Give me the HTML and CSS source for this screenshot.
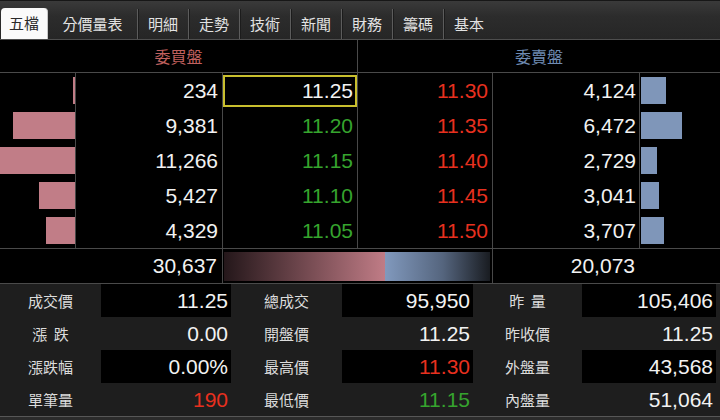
FILE: index.html
```html
<!DOCTYPE html>
<html lang="zh-Hant">
<head>
<meta charset="utf-8">
<title>五檔報價</title>
<link rel="stylesheet" href="styles.css">
</head>
<body>
<div class="app">
  <div class="tabs">
    <div class="tab active t1">五檔</div>
    <div class="tab t2">分價量表</div>
    <div class="tab sep">明細</div>
    <div class="tab sep">走勢</div>
    <div class="tab sep">技術</div>
    <div class="tab sep">新聞</div>
    <div class="tab sep">財務</div>
    <div class="tab sep">籌碼</div>
    <div class="tab sep">基本</div>
  </div>

  <div class="head">
    <div class="hcell bidh">委買盤</div>
    <div class="hcell askh">委賣盤</div>
  </div>

  <div class="book">
    <div class="cell bbar"><span class="bar pink" style="width:2px"></span></div>
    <div class="cell num">234</div>
    <div class="cell num price selcell"><span class="selbox">11.25</span></div>
    <div class="cell num price red">11.30</div>
    <div class="cell num avol">4,124</div>
    <div class="cell abar"><span class="bar blue" style="width:25px"></span></div>

    <div class="cell bbar"><span class="bar pink" style="width:62px"></span></div>
    <div class="cell num">9,381</div>
    <div class="cell num price green">11.20</div>
    <div class="cell num price red">11.35</div>
    <div class="cell num avol">6,472</div>
    <div class="cell abar"><span class="bar blue" style="width:41px"></span></div>

    <div class="cell bbar"><span class="bar pink" style="width:75px"></span></div>
    <div class="cell num">11,266</div>
    <div class="cell num price green">11.15</div>
    <div class="cell num price red">11.40</div>
    <div class="cell num avol">2,729</div>
    <div class="cell abar"><span class="bar blue" style="width:16px"></span></div>

    <div class="cell bbar"><span class="bar pink" style="width:36px"></span></div>
    <div class="cell num">5,427</div>
    <div class="cell num price green">11.10</div>
    <div class="cell num price red">11.45</div>
    <div class="cell num avol">3,041</div>
    <div class="cell abar"><span class="bar blue" style="width:18px"></span></div>

    <div class="cell bbar"><span class="bar pink" style="width:29px"></span></div>
    <div class="cell num">4,329</div>
    <div class="cell num price green">11.05</div>
    <div class="cell num price red">11.50</div>
    <div class="cell num avol">3,707</div>
    <div class="cell abar"><span class="bar blue" style="width:23px"></span></div>
  </div>

  <div class="totals">
    <div class="tcell num">30,637</div>
    <div class="tcell ratio">
      <div class="ratio-bid" style="width:161px"></div>
      <div class="ratio-ask"></div>
    </div>
    <div class="tcell num avol last">20,073</div>
    <div class="tcell last"></div>
  </div>

  <div class="stats">
    <div class="lbl">成交價</div><div class="val dark">11.25</div>
    <div class="lbl">總成交</div><div class="val dark">95,950</div>
    <div class="lbl">昨&nbsp;&nbsp;量</div><div class="val dark">105,406</div>
    <div class="pad"></div>

    <div class="lbl">漲&nbsp;&nbsp;跌</div><div class="val">0.00</div>
    <div class="lbl">開盤價</div><div class="val">11.25</div>
    <div class="lbl">昨收價</div><div class="val">11.25</div>
    <div class="pad"></div>

    <div class="lbl">漲跌幅</div><div class="val dark">0.00%</div>
    <div class="lbl">最高價</div><div class="val dark red">11.30</div>
    <div class="lbl">外盤量</div><div class="val dark">43,568</div>
    <div class="pad"></div>

    <div class="lbl">單筆量</div><div class="val red">190</div>
    <div class="lbl">最低價</div><div class="val green">11.15</div>
    <div class="lbl">內盤量</div><div class="val">51,064</div>
    <div class="pad"></div>
  </div>

  <div class="foot"></div>
</div>
</body>
</html>
```

FILE: styles.css
```css
* { box-sizing: border-box; }

html, body {
  margin: 0;
  padding: 0;
  background: #000;
}

.app {
  width: 720px;
  height: 420px;
  overflow: hidden;
  background: #000;
  color: #f2f2f2;
  font-family: "Liberation Sans", Arial, sans-serif;
}

/* ---------- tabs ---------- */
.tabs {
  height: 40px;
  display: flex;
  align-items: flex-end;
  border-top: 1px solid #171717;
  border-bottom: 1px solid #4e4e4e;
  background: linear-gradient(#3a3a3a, #2c2c2c 40%, #262626);
}

.tab {
  height: 30px;
  width: 51px;
  display: flex;
  align-items: center;
  justify-content: center;
  padding-bottom: 2px;
  font-family: "Noto Sans CJK TC", "Noto Sans CJK SC", sans-serif;
  font-size: 15px;
  color: #e2e2e2;
}

.tab.t1 { width: 47px; margin-left: 1px; }
.tab.t2 { width: 89px; }

.tab.sep {
  border-left: 1px solid #5c5c5c;
  box-shadow: inset 1px 0 0 #1c1c1c;
}

.tab.active {
  height: 31px;
  background: #fafafa;
  color: #2a2a2a;
  border-radius: 4px 4px 0 0;
  border-right: 1px solid #c8c8c8;
}

/* ---------- header ---------- */
.head {
  height: 33px;
  display: grid;
  grid-template-columns: 358px 362px;
  border-bottom: 1px solid #4a4a4a;
}

.hcell {
  display: flex;
  align-items: center;
  justify-content: center;
  font-family: "Noto Sans CJK TC", "Noto Sans CJK SC", sans-serif;
  font-size: 16px;
}

.bidh { color: #c0615f; border-right: 1px solid #4a4a4a; }
.askh { color: #6f8bb3; }

/* ---------- order book ---------- */
.book {
  display: grid;
  grid-template-columns: 76px 147px 135px 135px 147px 80px;
  grid-auto-rows: 35px;
}

.cell {
  display: flex;
  align-items: center;
  border-right: 1px solid #484848;
}

.cell.abar { border-right: none; }

.num {
  justify-content: flex-end;
  padding-right: 4px;
  font-size: 21px;
}

.num.avol { padding-right: 3px; }

.bbar { justify-content: flex-end; }
.abar { justify-content: flex-start; padding-left: 1px; }

.bar {
  display: block;
  height: 27px;
}

.pink { background: #c17d87; }
.blue { background: #7f96b9; }

.red { color: #e8301f; }
.green { color: #36a42e; }

.selcell {
  padding: 2px 0 1px 0;
  align-items: stretch;
}

.selbox {
  flex: 1;
  display: flex;
  align-items: center;
  justify-content: flex-end;
  padding-right: 2px;
  border: 2px solid #c9bf2e;
}

/* ---------- totals ---------- */
.totals {
  height: 36px;
  display: grid;
  grid-template-columns: 223px 270px 147px 80px;
  border-top: 1px solid #4a4a4a;
  border-bottom: 1px solid #4a4a4a;
}

.tcell {
  display: flex;
  align-items: center;
  border-right: 1px solid #484848;
}

.tcell.last { border-right: none; }

.tcell.num { padding-right: 5px; }

.ratio {
  padding: 3px 2px 2px 1px;
  align-items: stretch;
}

.ratio-bid {
  background: linear-gradient(to right, #24171a, #7a4e55 55%, #c07c86);
}

.ratio-ask {
  flex: 1;
  background: linear-gradient(to right, #8199bd, #55657e 55%, #191c21);
}

/* ---------- stats ---------- */
.stats {
  display: grid;
  grid-template-columns: 101px 130px 111px 131px 109px 134px 4px;
  grid-auto-rows: 33px;
  background: #1e1e1e;
}

.lbl {
  display: flex;
  align-items: center;
  justify-content: center;
  font-family: "Noto Sans CJK TC", "Noto Sans CJK SC", sans-serif;
  font-size: 15px;
  color: #dcdcdc;
}

.val {
  display: flex;
  align-items: center;
  justify-content: flex-end;
  padding-right: 3px;
  font-size: 21px;
}

.val.dark { background: #000; }

.foot {
  height: 4px;
  border-top: 1px solid #575757;
  background: #2b2b2b;
}
```
